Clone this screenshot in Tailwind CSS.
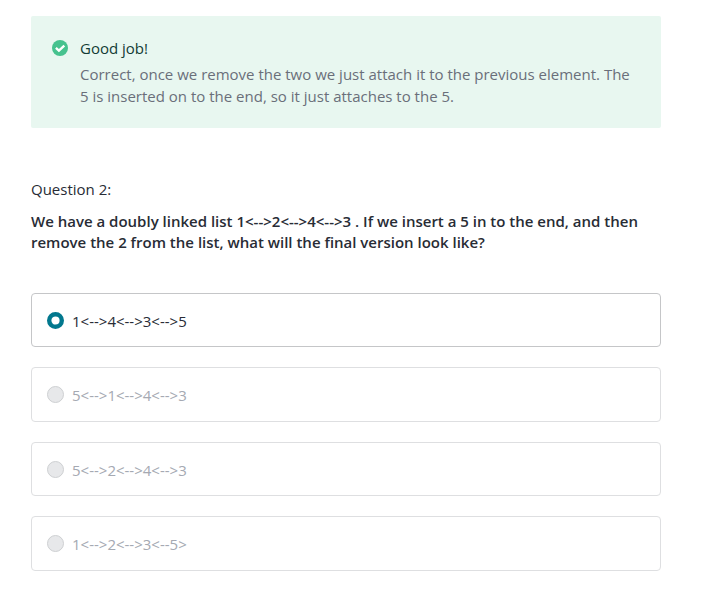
<!DOCTYPE html>
<html lang="en"><head><meta charset="utf-8"><title>Quiz</title><script src="https://cdn.jsdelivr.net/npm/@tailwindcss/browser@4"></script></head>
<body class="bg-white font-['Open_Sans',sans-serif] text-[15px] text-[#282c35]">
<main class="ml-[31px] w-[630px] pt-4">
<section class="flex h-28 rounded-[2px] bg-[#e8f7f0] pl-[21px] pt-[21px]">
<svg class="mt-[3px] size-4 shrink-0" viewBox="0 0 16 16"><circle cx="8" cy="8" r="8" fill="#46c28e"/><path d="M3.9 7.9 6.9 10.7l5.4-5" fill="none" stroke="#fff" stroke-width="2.3"/></svg>
<div class="ml-3"><h2 class="leading-[22px] text-[#123c35]">Good job!</h2><p class="mt-1 leading-[22px] text-[#6a6f7a] whitespace-nowrap">Correct, once we remove the two we just attach it to the previous element. The<br>5 is inserted on to the end, so it just attaches to the 5.</p></div>
</section>
<p class="mt-[50px] leading-[22px]">Question 2:</p>
<h1 class="mt-[11px] whitespace-nowrap font-semibold leading-[21px]">We have a doubly linked list 1&lt;--&gt;2&lt;--&gt;4&lt;--&gt;3 . If we insert a 5 in to the end, and then<br>remove the 2 from the list, what will the final version look like?</h1>
<div class="mt-[40px] flex flex-col gap-5 leading-[22px]">
<label class="flex h-[54px] items-start gap-2 rounded-[4px] border border-[#c5c6c8] pl-[15px] pt-4"><svg class="mt-0.5 size-[17px]" viewBox="0 0 17 17"><circle cx="8.5" cy="8.5" r="6.3" fill="#fff" stroke="#02788e" stroke-width="4.4"/></svg>1&lt;--&gt;4&lt;--&gt;3&lt;--&gt;5</label>
<label class="flex h-[55px] items-start gap-2 rounded-[4px] border border-[#dedfe1] pl-[15px] pt-4 text-[#a5a9b2]"><span class="mt-0.5 size-[17px] rounded-full border border-[#ced0d2] bg-[#e7e8ea]"></span>5&lt;--&gt;1&lt;--&gt;4&lt;--&gt;3</label>
<label class="flex h-[54px] items-start gap-2 rounded-[4px] border border-[#dedfe1] pl-[15px] pt-4 text-[#a5a9b2]"><span class="mt-0.5 size-[17px] rounded-full border border-[#ced0d2] bg-[#e7e8ea]"></span>5&lt;--&gt;2&lt;--&gt;4&lt;--&gt;3</label>
<label class="flex h-[55px] items-start gap-2 rounded-[4px] border border-[#dedfe1] pl-[15px] pt-4 text-[#a5a9b2]"><span class="mt-0.5 size-[17px] rounded-full border border-[#ced0d2] bg-[#e7e8ea]"></span>1&lt;--&gt;2&lt;--&gt;3&lt;--5&gt;</label>
</div></main></body></html>
